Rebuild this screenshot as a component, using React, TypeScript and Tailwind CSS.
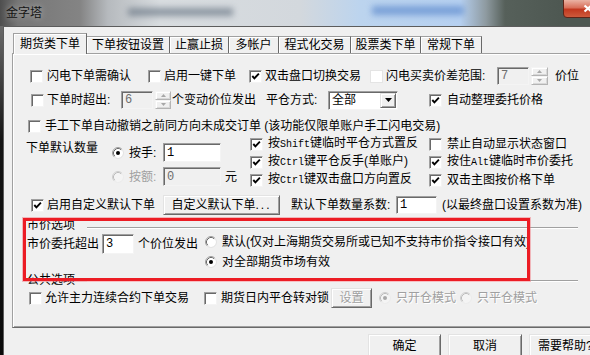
import React from "react";

const sunken =
  "border border-t-[#a0a0a0] border-l-[#a0a0a0] border-r-[#f4f4f4] border-b-[#f4f4f4] shadow-[inset_1px_1px_0_#696969]";
const raised =
  "border border-t-[#e3e3e3] border-l-[#e3e3e3] border-r-[#696969] border-b-[#696969] shadow-[inset_1px_1px_0_#ffffff,inset_-1px_-1px_0_#a0a0a0]";
const raisedLight =
  "border border-t-[#f4f4f4] border-l-[#f4f4f4] border-r-[#b4b4b4] border-b-[#b4b4b4] shadow-[inset_1px_1px_0_#ffffff,inset_-1px_-1px_0_#d8d8d8]";

function Check({ checked = false, faint = false }: { checked?: boolean; faint?: boolean }) {
  return (
    <span
      className={`relative inline-block h-[13px] w-[13px] shrink-0 bg-white ${
        faint ? "border border-[#e4e4e4]" : sunken
      }`}
    >
      {checked ? (
        <svg className="absolute left-0 top-0" width="11" height="11" viewBox="0 0 11 11">
          <path d="M2.3 5 L4.4 7.3 L8.9 2.6" fill="none" stroke="#000" strokeWidth="1.9" />
        </svg>
      ) : null}
    </span>
  );
}

function Radio({ checked = false, disabled = false }: { checked?: boolean; disabled?: boolean }) {
  return (
    <svg width="12" height="12" viewBox="0 0 12 12" className="shrink-0">
      <circle cx="6" cy="6" r="5" fill={disabled ? "#f4f4f4" : "#ffffff"} />
      <path d="M2.11 9.89 A5.5 5.5 0 0 1 9.89 2.11" fill="none" stroke={disabled ? "#cfcfcf" : "#a0a0a0"} />
      <path d="M9.89 2.11 A5.5 5.5 0 0 1 2.11 9.89" fill="none" stroke={disabled ? "#ececec" : "#e3e3e3"} />
      <path d="M2.82 9.18 A4.5 4.5 0 0 1 9.18 2.82" fill="none" stroke={disabled ? "#bdbdbd" : "#6a6a6a"} />
      {checked ? <circle cx="6" cy="6" r="2" fill={disabled ? "#a8a8a8" : "#000000"} /> : null}
    </svg>
  );
}

function Field({
  className,
  value,
  disabled = false,
}: {
  className: string;
  value: string;
  disabled?: boolean;
}) {
  return (
    <div
      className={`${sunken} ${
        disabled ? "bg-[#f0f0f0] text-[#6d6d6d]" : "bg-white text-black"
      } flex shrink-0 items-center pl-[3px] font-['Liberation_Mono',monospace] text-[12px] leading-none ${className}`}
    >
      {value}
    </div>
  );
}

function Spinner({ className }: { className: string }) {
  return (
    <div className={`flex shrink-0 flex-col ${className}`}>
      <div className={`flex flex-1 items-center justify-center bg-[#f0f0f0] ${raisedLight}`}>
        <svg width="5" height="3" viewBox="0 0 5 3">
          <path d="M0 3L2.5 0L5 3Z" fill="#a8a8a8" />
        </svg>
      </div>
      <div className={`flex flex-1 items-center justify-center bg-[#f0f0f0] ${raisedLight}`}>
        <svg width="5" height="3" viewBox="0 0 5 3">
          <path d="M0 0L5 0L2.5 3Z" fill="#a8a8a8" />
        </svg>
      </div>
    </div>
  );
}

function Btn({
  className,
  children,
  disabled = false,
}: {
  className: string;
  children: React.ReactNode;
  disabled?: boolean;
}) {
  return (
    <div
      className={`${raised} flex shrink-0 items-center justify-center bg-[#f0f0f0] ${
        disabled ? "text-[#a0a0a0] [text-shadow:1px_1px_0_#ffffff]" : "text-black"
      } ${className}`}
    >
      {children}
    </div>
  );
}

function Mono({ children }: { children: React.ReactNode }) {
  return <span className="font-['Liberation_Mono',monospace] text-[10px]">{children}</span>;
}

const tabs = [
  { t: "期货类下单", w: "w-[74px]" },
  { t: "下单按钮设置", w: "w-[83px]" },
  { t: "止赢止损", w: "w-[59px]" },
  { t: "多帐户", w: "w-[50px]" },
  { t: "程式化交易", w: "w-[72px]" },
  { t: "股票类下单", w: "w-[70px]" },
  { t: "常规下单", w: "w-[61px]" },
];

function TitleBar() {
  return (
    <div className="relative h-[26px] shrink-0 overflow-hidden bg-[linear-gradient(90deg,#4e4e4e_0px,#767676_18px,#848484_80px,#b6babe_108px,#d8dcdf_160px,#d3d8dd_300px,#bcd4ee_360px,#b6d0f0_460px,#8e9aa0_486px,#56605a_505px,#4e5852_560px)]">
      <div className="absolute left-[128px] top-[8px] h-[8px] w-[105px] bg-[#5a6878] opacity-60 blur-[3px]" />
      <div className="absolute left-[372px] top-[6px] h-[9px] w-[92px] bg-[#4f7fc8] opacity-60 blur-[3px]" />
      <div className="absolute left-[6px] top-[6px] text-[12px] leading-[14px] text-[#141414] [text-shadow:0_0_6px_rgba(255,255,255,0.55)]">
        金字塔
      </div>
      <div className="absolute left-[563px] top-[-1px] flex h-[19px] w-[50px] items-center justify-center rounded-b-[4px] border border-[#5e2418] bg-[linear-gradient(#eab3a4,#d8705a_45%,#c2381f_55%,#cf5a3c)]">
        <svg width="10" height="9" viewBox="0 0 10 9">
          <path d="M1.5 1.5 L8.5 7.5 M8.5 1.5 L1.5 7.5" stroke="#ffffff" strokeWidth="2.2" />
        </svg>
      </div>
    </div>
  );
}

export default function App() {
  return (
    <div className="relative h-[355px] w-[590px] overflow-hidden bg-[#f0f0f0] font-['Liberation_Sans','Noto_Sans_CJK_SC',sans-serif] text-[12px] leading-[14px] text-black">
      <TitleBar />
      <div className="flex h-[329px]">
        <div className="w-[3px] shrink-0 bg-[linear-gradient(#6a6a6a,#141414_35%,#0a0a0a)]" />
        <div className="flex min-w-0 flex-1 flex-col border-l border-t border-[#5c5c5c] pl-[8px] pt-[6px]">
          {/* tab strip */}
          <div className="flex h-[20px] shrink-0 items-end pl-[1px]">
            {tabs.map((tab, i) =>
              i === 0 ? (
                <div
                  key={tab.t}
                  className={`relative z-10 -mb-px flex h-[21px] shrink-0 items-center justify-center border-l border-r border-t border-l-[#a0a0a0] border-t-[#a0a0a0] border-r-[#696969] bg-[#f0f0f0] shadow-[inset_1px_1px_0_#ffffff] ${tab.w}`}
                >
                  {tab.t}
                </div>
              ) : (
                <div
                  key={tab.t}
                  className={`flex h-[17px] shrink-0 items-center justify-center border-r border-t border-t-[#a0a0a0] border-r-[#696969] bg-[#f0f0f0] shadow-[inset_1px_1px_0_#ffffff] ${tab.w}`}
                >
                  {tab.t}
                </div>
              )
            )}
          </div>

          {/* panel */}
          <div className="flex h-[275px] shrink-0 flex-col border-b border-l border-t border-b-[#696969] border-l-[#a0a0a0] border-t-[#a0a0a0] shadow-[inset_1px_1px_0_#ffffff,inset_0_-1px_0_#a0a0a0]">
            {/* row 1 */}
            <div className="mt-[12px] flex h-[20px] items-center pl-[17px]">
              <div className="flex w-[118px] shrink-0 items-center gap-[4px]">
                <Check />
                <span>闪电下单需确认</span>
              </div>
              <div className="flex w-[101px] shrink-0 items-center gap-[3px]">
                <Check />
                <span>启用一键下单</span>
              </div>
              <div className="flex w-[121px] shrink-0 items-center gap-[3px]">
                <Check checked />
                <span>双击盘口切换交易</span>
              </div>
              <div className="flex w-[127px] shrink-0 items-center gap-[3px]">
                <Check faint />
                <span>闪电买卖价差范围:</span>
              </div>
              <Field className="h-[18px] w-[32px]" value="7" disabled />
              <Spinner className="ml-[2px] h-[18px] w-[17px]" />
              <span className="ml-[7px] shrink-0">价位</span>
            </div>

            {/* row 2 */}
            <div className="mt-[4px] flex h-[20px] items-center pl-[18px]">
              <div className="flex w-[90px] shrink-0 items-center gap-[3px]">
                <Check />
                <span>下单时超出:</span>
              </div>
              <Field className="h-[18px] w-[32px]" value="6" disabled />
              <Spinner className="ml-[2px] h-[18px] w-[16px]" />
              <span className="ml-[1px] w-[94px] shrink-0">个变动价位发出</span>
              <span className="w-[62px] shrink-0">平仓方式:</span>
              <div className={`${sunken} flex h-[19px] w-[70px] shrink-0 items-center bg-white pl-[3px] pr-[1px]`}>
                <span>全部</span>
                <div className={`${raised} ml-auto flex h-[15px] w-[16px] items-center justify-center bg-[#f0f0f0]`}>
                  <svg width="7" height="4" viewBox="0 0 7 4">
                    <path d="M0 0H7L3.5 4Z" fill="#000" />
                  </svg>
                </div>
              </div>
              <div className="ml-[31px] flex shrink-0 items-center gap-[5px]">
                <Check checked />
                <span>自动整理委托价格</span>
              </div>
            </div>

            {/* row 3 */}
            <div className="mt-[7px] flex h-[18px] items-center gap-[4px] pl-[15px]">
              <Check />
              <span>手工下单自动撤销之前同方向未成交订单 (该功能仅限单账户手工闪电交易)</span>
            </div>

            {/* row 4 block */}
            <div className="flex h-[54px]">
              <div className="flex w-[237px] shrink-0 pl-[13px]">
                <span className="mt-[6px] w-[86px] shrink-0">下单默认数量</span>
                <div className="flex flex-col gap-[5px] pt-[8px]">
                  <div className="flex h-[19px] items-center">
                    <Radio checked />
                    <span className="ml-[5px] w-[34px] shrink-0">按手:</span>
                    <Field className="h-[19px] w-[58px]" value="1" />
                  </div>
                  <div className="flex h-[19px] items-center">
                    <Radio disabled />
                    <span className="ml-[5px] w-[34px] shrink-0 text-[#a0a0a0]">按额:</span>
                    <Field className="h-[19px] w-[58px]" value="0" disabled />
                    <span className="ml-[4px]">元</span>
                  </div>
                </div>
              </div>
              <div className="flex w-[179px] shrink-0 flex-col">
                <div className="flex h-[18px] items-center gap-[5px]">
                  <Check checked />
                  <span>
                    按<Mono>Shift</Mono>键临时平仓方式置反
                  </span>
                </div>
                <div className="flex h-[18px] items-center gap-[5px]">
                  <Check checked />
                  <span>
                    按<Mono>Ctrl</Mono>键平仓反手(单账户)
                  </span>
                </div>
                <div className="flex h-[18px] items-center gap-[5px]">
                  <Check checked />
                  <span>
                    按<Mono>Ctrl</Mono>键双击盘口方向置反
                  </span>
                </div>
              </div>
              <div className="flex flex-col">
                <div className="flex h-[18px] items-center gap-[5px]">
                  <Check />
                  <span>禁止自动显示状态窗口</span>
                </div>
                <div className="flex h-[18px] items-center gap-[5px]">
                  <Check checked />
                  <span>
                    按住<Mono>Alt</Mono>键临时市价委托
                  </span>
                </div>
                <div className="flex h-[18px] items-center gap-[5px]">
                  <Check checked />
                  <span>双击主图按价格下单</span>
                </div>
              </div>
            </div>

            {/* row 5 */}
            <div className="mt-[6px] flex h-[20px] items-center pl-[18px]">
              <div className="flex w-[132px] shrink-0 items-center gap-[3px]">
                <Check checked />
                <span>启用自定义默认下单</span>
              </div>
              <Btn className="h-[20px] w-[117px]">
                自定义默认下单<span className="tracking-[2px]">...</span>
              </Btn>
              <span className="ml-[11px] w-[105px] shrink-0">默认下单数量系数:</span>
              <Field className="h-[18px] w-[41px]" value="1" />
              <span className="ml-[5px] shrink-0 whitespace-nowrap">(以最终盘口设置系数为准)</span>
            </div>

            {/* 市价选项 */}
            <div className="mt-[3px] flex h-[14px] items-start pl-[14px]">
              <span className="shrink-0">市价选项</span>
              <div className="ml-[12px] mt-[9px] h-[2px] w-[491px] shrink-0 border-b border-t border-b-white border-t-[#a0a0a0]" />
            </div>
            <div className="flex h-[40px] items-start pl-[14px]">
              <div className="mt-[2px] flex h-[20px] shrink-0 items-center">
                <span className="w-[75px] shrink-0">市价委托超出</span>
                <Field className="h-[20px] w-[32px]" value="3" />
                <span className="ml-[4px] w-[63px] shrink-0">个价位发出</span>
              </div>
              <div className="ml-[4px] flex flex-col">
                <div className="flex h-[20px] items-center">
                  <Radio />
                  <span className="ml-[5px] whitespace-nowrap">
                    默认(仅对上海期货交易所或已知不支持市价指令接口有效)
                  </span>
                </div>
                <div className="flex h-[20px] items-center">
                  <Radio checked />
                  <span className="ml-[5px]">对全部期货市场有效</span>
                </div>
              </div>
            </div>

            {/* 公共选项 */}
            <div className="mt-[1px] flex h-[14px] items-start pl-[14px]">
              <span className="shrink-0">公共选项</span>
              <div className="ml-[12px] mt-[7px] h-[2px] w-[491px] shrink-0 border-b border-t border-b-white border-t-[#a0a0a0]" />
            </div>
            <div className="mt-[1px] flex h-[20px] items-center pl-[16px]">
              <div className="flex w-[175px] shrink-0 items-center gap-[3px]">
                <Check />
                <span>允许主力连续合约下单交易</span>
              </div>
              <div className="flex w-[127px] shrink-0 items-center gap-[4px]">
                <Check />
                <span>期货日内平仓转对锁</span>
              </div>
              <Btn className="h-[20px] w-[41px]" disabled>
                设置
              </Btn>
              <span className="ml-[7px] flex items-center">
                <Radio checked disabled />
              </span>
              <span className="ml-[5px] w-[60px] shrink-0 text-[#a0a0a0] [text-shadow:1px_1px_0_#ffffff]">
                只开仓模式
              </span>
              <span className="ml-[4px] flex items-center">
                <Radio disabled />
              </span>
              <span className="ml-[5px] shrink-0 text-[#a0a0a0] [text-shadow:1px_1px_0_#ffffff]">只平仓模式</span>
            </div>
          </div>

          {/* bottom buttons */}
          <div className="mt-[6px] flex h-[24px] shrink-0 pl-[356px]">
            <Btn className="h-[24px] w-[73px]">确定</Btn>
            <Btn className="ml-[7px] h-[24px] w-[74px]">取消</Btn>
            <Btn className="ml-[7px] h-[24px] w-[75px] justify-start pl-[8px] whitespace-nowrap">需要帮助?</Btn>
          </div>
        </div>
      </div>

      {/* red annotation rectangle */}
      <div className="pointer-events-none absolute left-[23px] top-[218px] h-[63px] w-[507px] border-[3px] border-[#ec1c24] shadow-[0_0_0_1px_rgba(240,110,120,0.45)]" />
    </div>
  );
}
